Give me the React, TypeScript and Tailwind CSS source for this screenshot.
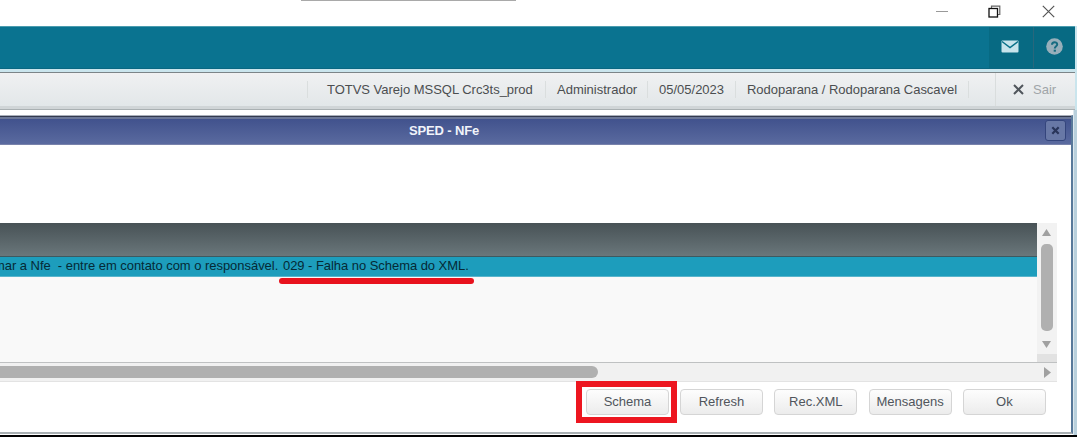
import React from "react";

function TitleBar() {
  return (
    <div className="flex h-[26px] items-start bg-white">
      <div className="ml-[301px] h-px w-[215px] bg-[#a9a9a9]" />
      <div className="mr-[22px] ml-auto flex h-[22px] items-center">
        <div className="mr-[40px] h-px w-[12px] bg-[#999]" />
        <svg className="mr-[41px]" width="13" height="13" viewBox="0 0 13 13" fill="none">
          <path d="M3.5 3V1.2H11.8V9.5H10" stroke="#666" strokeWidth="1.2" />
          <rect x="1" y="3.5" width="8.5" height="8.5" stroke="#111" strokeWidth="1.3" />
        </svg>
        <svg width="13" height="13" viewBox="0 0 13 13" fill="none" stroke="#555" strokeWidth="1.2">
          <path d="M.8.8 12.2 12.2M12.2.8.8 12.2" />
        </svg>
      </div>
    </div>
  );
}

function AppBar() {
  return (
    <div className="mr-[2px] flex h-[43px] justify-end border-y border-t-[#4b9caf] border-b-[#0a6782] bg-[#0a7390]">
      <div className="flex w-[44px] items-center justify-center bg-[#076a83] pb-[2px] pr-[2px]">
        <svg width="18" height="13" viewBox="0 0 18 13">
          <rect x=".5" y=".5" width="17" height="12" rx="1" fill="#c8e4ec" />
          <path d="M1 1.5 9 7.5 17 1.5" fill="none" stroke="#087088" strokeWidth="1.4" />
        </svg>
      </div>
      <div className="flex w-[42px] items-center justify-center border-l border-[#28677c] bg-[#076a83] pb-[2px]">
        <svg width="17" height="17" viewBox="0 0 17 17">
          <circle cx="8.5" cy="8.5" r="8.3" fill="#97afba" />
          <path d="M6 6.8C6 3.2 11.2 3.4 11.2 6.5c0 1.8-2.4 1.8-2.4 4" fill="none" stroke="#176b80" strokeWidth="2" />
          <rect x="7.7" y="11.7" width="2.2" height="2" fill="#176b80" />
        </svg>
      </div>
    </div>
  );
}

function InfoBar() {
  return (
    <div className="mr-[2px] flex h-[38px] items-stretch border-t border-b border-t-[#7c8588] border-b-[#a9b0b2] bg-linear-to-b from-[#f0f1f2] to-[#e1e6e8] text-[13px] leading-[34px] text-[#4b4e50]">
      <div className="flex w-full border-b-[3px] border-[#d0d5d7]">
        <div className="my-2 ml-[307px] flex w-[238px] items-center border-l border-[#dadede] pl-[19px] whitespace-nowrap"><span className="tracking-[-0.02px]">TOTVS Varejo MSSQL Crc3ts_prod</span></div>
        <div className="my-2 flex w-[102px] items-center border-l border-[#dadede] pl-[11px]">Administrador</div>
        <div className="my-2 flex w-[88px] items-center border-l border-[#dadede] pl-[11px]">05/05/2023</div>
        <div className="my-2 flex w-[233px] items-center border-l border-[#dadede] pl-[11px] whitespace-nowrap"><span className="tracking-[-0.03px]">Rodoparana / Rodoparana Cascavel</span></div>
        <div className="my-2 w-[27px] border-l border-[#dadede]" />
        <div className="flex flex-1 items-center border-l border-[#d9dddd] pl-[17px] text-[#a0a5a8]">
          <svg className="mr-[9px]" width="11" height="11" viewBox="0 0 11 11" fill="none" stroke="#50565c" strokeWidth="2">
            <path d="M1 1 10 10M10 1 1 10" />
          </svg>
          Sair
        </div>
      </div>
    </div>
  );
}

function Grid() {
  return (
    <div className="mt-[78px] mr-[14px]">
      <div className="flex h-[139px]">
        <div className="flex flex-1 flex-col bg-[#f9f9f9]">
          <div className="h-[34px] border-b border-[#3e5960] bg-linear-to-b from-[#485256] to-[#6a777b]" />
          <div className="flex h-[20px] items-start border-b border-[#59b5cc] bg-[#1d9dbc] text-[13px] leading-[17px] whitespace-pre text-[#052a36]">
            <span className="-ml-[6px] w-[285px] shrink-0 tracking-[-0.04px]">mar a Nfe  - entre em contato com o responsável.</span>
            <span className="ml-[4px] tracking-[-0.05px]">029 - Falha no Schema do XML.</span>
          </div>
          <div className="mt-[1px] ml-[279px] h-[6px] w-[195px] rounded-full bg-[#e8121d]" />
        </div>
        <div className="flex w-[20px] flex-col items-center bg-[#f2f2f2]">
          <svg className="mt-[6px] mr-[1px]" width="9" height="7" viewBox="0 0 9 7"><path d="M4.5 0 9 7H0Z" fill="#a0a0a0" /></svg>
          <div className="mt-[8px] mr-[1px] h-[87px] w-[12px] rounded-[5px] bg-[#b0b0b0]" />
          <svg className="mt-[10px] mr-[1px]" width="9" height="7" viewBox="0 0 9 7"><path d="M0 0H9L4.5 7Z" fill="#a0a0a0" /></svg>
          <div className="mt-auto h-[8px] w-full bg-[#e2e2e2]" />
        </div>
      </div>
      <div className="flex h-[20px] items-center border-t border-b border-t-[#bfc1c2] border-b-[#e3e3e3] bg-[#f1f1f1]">
        <div className="h-[12px] w-[598px] rounded-r-[6px] bg-[#b0b0b0]" />
        <svg className="mr-[6px] ml-auto" width="7" height="11" viewBox="0 0 7 11"><path d="M0 0 7 5.5 0 11Z" fill="#a0a0a0" /></svg>
      </div>
    </div>
  );
}

function ActionButton({ label }: { label: string }) {
  return (
    <button className="flex h-[26px] w-[83px] items-center justify-center rounded-[4px] border border-[#d5d5d5] bg-linear-to-b from-[#fdfdfd] to-[#ececec] text-[13px] text-[#50555c]">
      {label}
    </button>
  );
}

function Dialog() {
  return (
    <div className="flex h-[319px] w-[1073px] flex-col border-t border-r-2 border-b-2 border-t-[#a9afbb] border-r-[#58799a] border-b-[#a9b0b3] bg-white">
      <div className="flex h-[29px] items-center border-t border-b border-t-[#333a4e] border-b-[#7882ab] bg-[linear-gradient(#6b7797_0_2px,#41528d_2px,#5a6a9f)]">
        <span className="ml-[409px] pb-px text-[13px] leading-none font-bold tracking-[-0.15px] text-[#f1f3fa]">SPED - NFe</span>
        <div className="mr-[5px] ml-auto flex h-[21px] w-[21px] items-center justify-center rounded-[3px] border border-[#34457c] bg-[#6878a6]">
          <svg width="9" height="9" viewBox="0 0 9 9" stroke="#29355a" strokeWidth="2.2"><path d="M1.3 1.3 7.7 7.7M7.7 1.3 1.3 7.7" /></svg>
        </div>
      </div>
      <Grid />
      <div className="-mt-px flex items-center">
        <div className="ml-[576px] flex h-[42px] w-[101px] items-center border-[6px] border-[#ed1620] pl-[4px]">
          <div className="shrink-0"><ActionButton label="Schema" /></div>
        </div>
        <div className="ml-[3px] flex gap-[11.3px]">
          <ActionButton label="Refresh" />
          <ActionButton label="Rec.XML" />
          <ActionButton label="Mensagens" />
          <ActionButton label="Ok" />
        </div>
      </div>
    </div>
  );
}

export default function App() {
  return (
    <div className="flex h-[437px] w-[1077px] flex-col overflow-hidden bg-white font-['Liberation_Sans',Arial,sans-serif]">
      <TitleBar />
      <div className="flex flex-1 flex-col bg-[#cae5ed]">
        <AppBar />
        <div className="h-[3px] shrink-0" />
        <InfoBar />
        <div className="flex h-[327px] flex-col bg-[linear-gradient(to_right,#fff_0_1073px,#b9d0dc_1074px)] pt-[5px]">
          <Dialog />
          <div className="mt-auto h-[2px] bg-black" />
        </div>
      </div>
    </div>
  );
}
